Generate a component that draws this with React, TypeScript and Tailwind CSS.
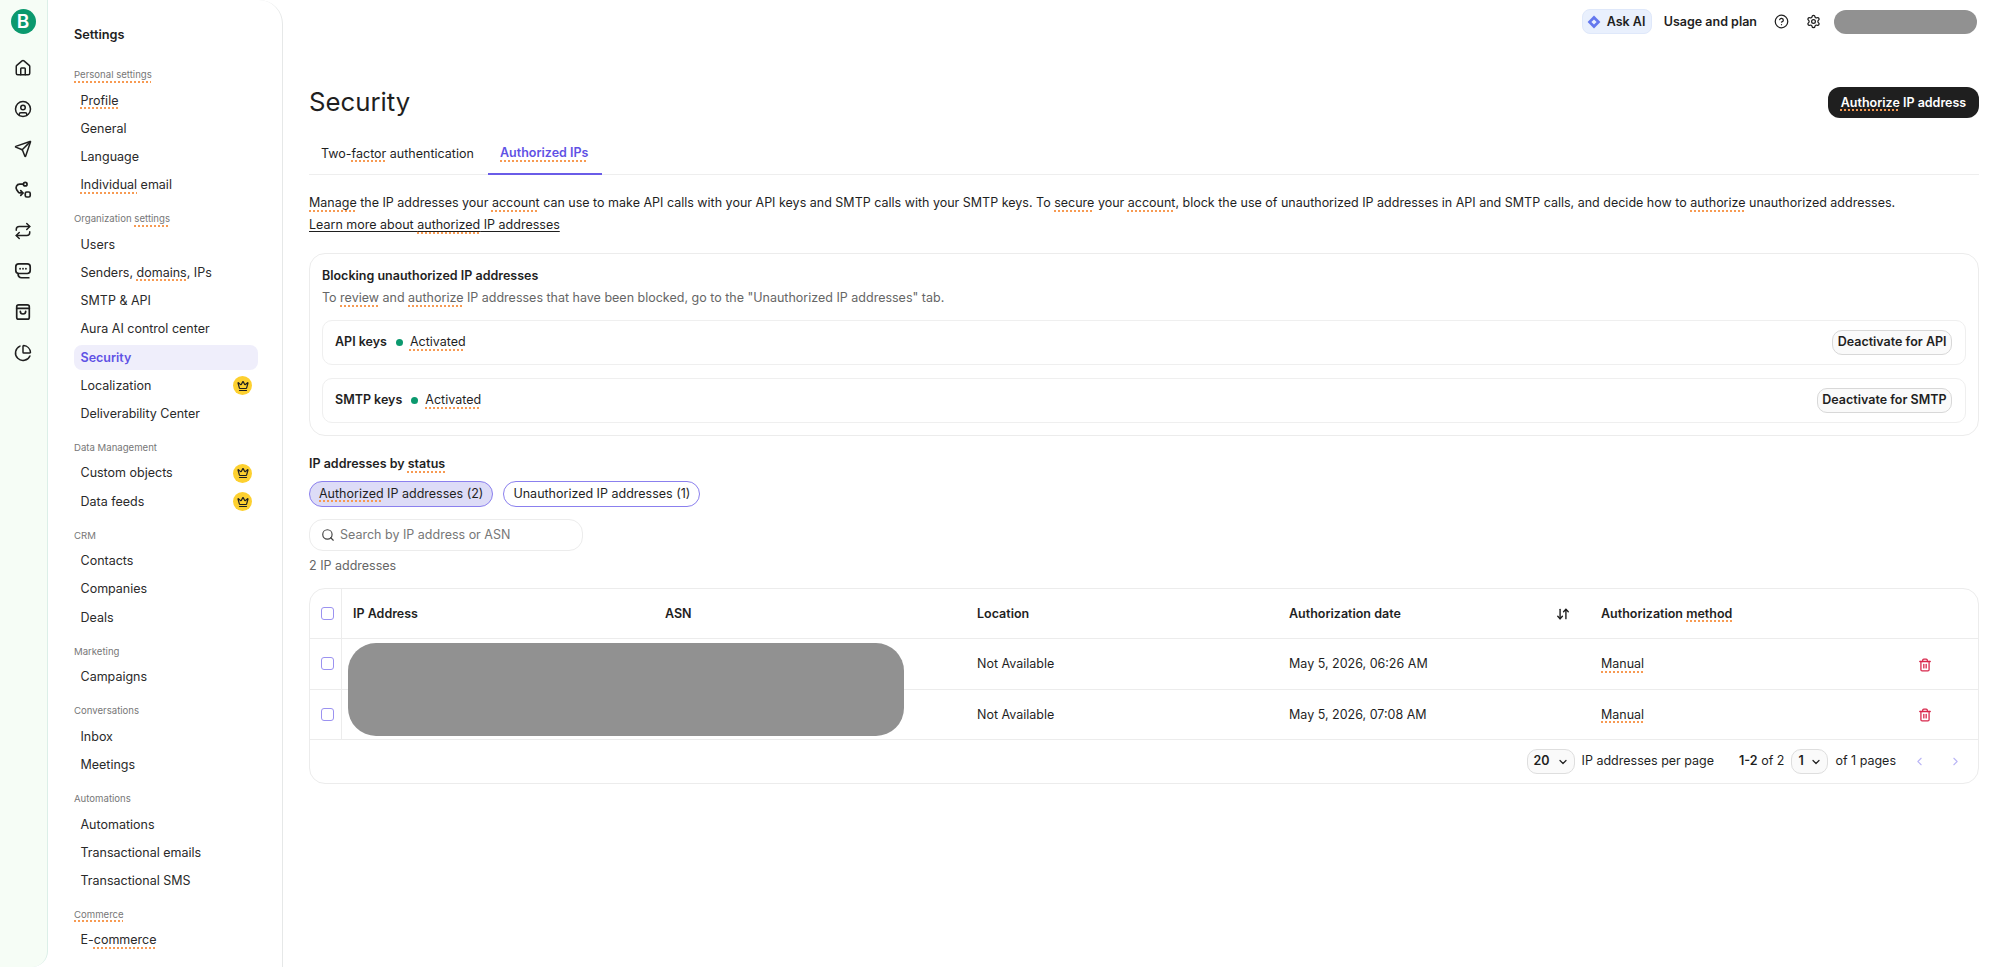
import React from 'react';
import { ChevronDown, ChevronLeft, ChevronRight, CircleHelp, CircleUser, Crown, House, Repeat, Search, Send, Settings, Trash2, ChartPie, ArrowDownUp } from 'lucide-react';

// ── Data ─────────────────────────────────────────────

type NavItem = { label: React.ReactNode; crown?: boolean; active?: boolean };

// Spellcheck squiggle from the browser, kept since it is in the picture
const S = ({ children }: { children: React.ReactNode }) => (
  <span className="underline decoration-dotted decoration-[#f79a52] decoration-[1.5px] underline-offset-[3px]">{children}</span>
);

const NAV: { title: React.ReactNode; items: NavItem[] }[] = [
  {
    title: <S>Personal settings</S>,
    items: [{ label: <S>Profile</S> }, { label: 'General' }, { label: 'Language' }, { label: <><S>Individual</S> email</> }],
  },
  {
    title: <>Organization <S>settings</S></>,
    items: [
      { label: 'Users' },
      { label: <>Senders, <S>domains</S>, IPs</> },
      { label: 'SMTP & API' },
      { label: 'Aura AI control center' },
      { label: 'Security', active: true },
      { label: 'Localization', crown: true },
      { label: 'Deliverability Center' },
    ],
  },
  { title: 'Data Management', items: [{ label: 'Custom objects', crown: true }, { label: 'Data feeds', crown: true }] },
  { title: 'CRM', items: [{ label: 'Contacts' }, { label: 'Companies' }, { label: 'Deals' }] },
  { title: 'Marketing', items: [{ label: 'Campaigns' }] },
  { title: 'Conversations', items: [{ label: 'Inbox' }, { label: 'Meetings' }] },
  { title: 'Automations', items: [{ label: 'Automations' }, { label: 'Transactional emails' }, { label: 'Transactional SMS' }] },
  { title: <S>Commerce</S>, items: [{ label: <>E-<S>commerce</S></> }] },
];

const ROWS = [
  { location: 'Not Available', date: 'May 5, 2026, 06:26 AM', method: 'Manual' },
  { location: 'Not Available', date: 'May 5, 2026, 07:08 AM', method: 'Manual' },
];

const GRID = 'grid grid-cols-[32px_312px_312px_312px_312px_1fr]';

// ── Rail icons with no lucide match ──────────────────

const FlowIcon = () => (
  <svg viewBox="0 0 16 16" className="w-[18px] h-[18px]" fill="none" stroke="currentColor" strokeWidth="1.5" strokeLinecap="round" strokeLinejoin="round">
    <circle cx="10" cy="2.8" r="1.6" />
    <rect x="10" y="9.8" width="4.4" height="4.4" rx="1.3" />
    <path d="M8.2 2.8H5a3.2 3.2 0 0 0-2.6 5l1.4 2a1.8 1.8 0 0 0 1.5.8h2.4" />
    <path d="M6 8.6 8 10.7 6 12.8" />
  </svg>
);

const ChatIcon = () => (
  <svg viewBox="0 0 16 16" className="w-[18px] h-[18px]" fill="none" stroke="currentColor" strokeWidth="1.5" strokeLinecap="round" strokeLinejoin="round">
    <rect x="1.6" y="1.6" width="12.8" height="8.6" rx="2.6" />
    <path d="M3.6 10.2c0 2.6 1.4 3.8 3.2 3.8h6.4" />
    <path d="M5.4 6h.01M8 6h.01M10.6 6h.01" strokeWidth="1.6" />
  </svg>
);

const BagIcon = () => (
  <svg viewBox="0 0 16 16" className="w-[18px] h-[18px]" fill="none" stroke="currentColor" strokeWidth="1.5" strokeLinecap="round" strokeLinejoin="round">
    <rect x="2.4" y="1.6" width="11.2" height="12.8" rx="1.8" />
    <path d="M2.4 4.8h11.2" />
    <path d="M5.6 7.4a2.4 2.4 0 0 0 4.8 0" />
  </svg>
);

const AiIcon = () => (
  <svg viewBox="0 0 14 14" className="w-[14px] h-[14px]">
    <path d="M7 0.6 13.4 7 7 13.4 0.6 7Z" fill="#6478ee" />
    <path d="M7 4.4 9.6 7 7 9.6 4.4 7Z" fill="#eaf0fd" />
  </svg>
);

// ── Parts ────────────────────────────────────────────

const Rail = () => (
  <div className="w-[48px] shrink-0 h-full bg-[#f6fdf6] border-r border-[#dcefe8] rounded-br-[16px] flex flex-col items-center pr-[2px] text-[#1f1f1f]">
    <div className="mt-[8.5px] ml-[1px] w-[25px] h-[25px] rounded-full bg-[#0b996e] flex items-center justify-center text-white text-[19px] font-semibold leading-none">B</div>
    <div className="mt-[25.5px] flex flex-col items-center gap-[22.7px] [&>svg]:w-[18px] [&>svg]:h-[18px]">
      <House strokeWidth={2} />
      <CircleUser strokeWidth={2} />
      <Send strokeWidth={2} />
      <FlowIcon />
      <Repeat strokeWidth={2} />
      <ChatIcon />
      <BagIcon />
      <ChartPie strokeWidth={2} />
    </div>
  </div>
);

const Sidebar = () => (
  <div className="w-[235px] shrink-0 h-full bg-white border-r border-[#e6e8e8] rounded-tr-[24px] pt-[25px] pl-[26px] pr-[24px] overflow-hidden">
    <div className="h-5 leading-5 text-[12.75px] font-semibold text-[#1f1f1f] mb-[22px]">Settings</div>
    {NAV.map((section, i) => (
      <div key={i} className="mb-3">
        <div className="h-4 leading-4 text-[9.6px] text-[#777] mb-[3.4px]">{section.title}</div>
        {section.items.map((item, j) => (
          <div key={j} className="h-[28.2px] flex items-center">
            <div className={`w-full h-[25px] rounded-lg pl-[6.5px] pr-[6px] flex items-center justify-between text-[12.5px] ${item.active ? 'bg-[#efeefb] text-[#5f52e5] font-semibold' : 'text-[#2a2a2a]'}`}>
              <span className="pt-px">{item.label}</span>
              {item.crown && (
                <span className="w-[19px] h-[19px] rounded-full bg-[#fdd02f] flex items-center justify-center text-[#1f1f1f]">
                  <Crown className="w-3 h-3" strokeWidth={2.4} />
                </span>
              )}
            </div>
          </div>
        ))}
      </div>
    ))}
  </div>
);

const TopBar = () => (
  <div className="h-[25px] flex items-center justify-end text-[#1f1f1f]">
    <div className="h-[25px] w-[70px] rounded-lg bg-[#e9f0fd] border border-[#dfe8fa] flex items-center pl-[4px] gap-[6px] text-[12.5px] font-semibold">
      <AiIcon /> <span className="pt-px">Ask AI</span>
    </div>
    <span className="ml-3 pt-px text-[12.5px] font-semibold">Usage and plan</span>
    <CircleHelp className="ml-[17px] w-[15px] h-[15px]" strokeWidth={2} />
    <Settings className="ml-[17px] w-[15px] h-[15px]" strokeWidth={2} />
    <div className="ml-[13px] mr-[2px] w-[143px] h-[24px] rounded-[12px] bg-[#919191]" />
  </div>
);

const OutlineButton = ({ children }: { children: React.ReactNode }) => (
  <button className="h-[25px] px-[4.5px] rounded-[10px] border border-[#d8d8d8] bg-[#fafafa] text-[12.5px] font-semibold text-[#1f1f1f]">{children}</button>
);

const KeyRow = ({ name, action }: { name: string; action: string }) => (
  <div className="h-[45px] rounded-[10px] border border-[#efefef] pl-[12px] pr-[13px] flex items-center justify-between">
    <div className="flex items-center text-[12.5px] text-[#1f1f1f]">
      <span className="font-semibold">{name}</span>
      <span className="ml-[9px] mr-[7px] w-[7px] h-[7px] rounded-full bg-[#0b996e]" />
      <S>Activated</S>
    </div>
    <OutlineButton>{action}</OutlineButton>
  </div>
);

const PageSelect = ({ value, width }: { value: string; width: string }) => (
  <div className={`${width} h-[25px] rounded-[10px] border border-[#dedede] bg-[#fafafa] flex items-center justify-between pl-[6px] pr-[5px] text-[12.5px] font-semibold text-[#1f1f1f]`}>
    {value}
    <ChevronDown className="w-3 h-3" strokeWidth={2.4} />
  </div>
);

const Checkbox = () => <span className="w-[13px] h-[13px] rounded-[3px] border border-[#9b92f0] bg-white" />;

const Table = () => (
  <div className="relative mt-[12px] rounded-2xl border border-[#ececec] text-[12.5px] text-[#1f1f1f]">
    <div className={`${GRID} h-[50px] border-b border-[#ececec] font-semibold`}>
      <div className="flex items-center justify-center pl-1 border-r border-[#ececec]"><Checkbox /></div>
      <div className="flex items-center pl-[11px] pt-px">IP Address</div>
      <div className="flex items-center pl-[11px] pt-px">ASN</div>
      <div className="flex items-center pl-[11px] pt-px">Location</div>
      <div className="flex items-center justify-between pl-[11px] pr-[20px] pt-px">
        Authorization date
        <ArrowDownUp className="w-[14px] h-[14px]" strokeWidth={2.4} />
      </div>
      <div className="flex items-center pl-[11px] pt-px"><span>Authorization <S>method</S></span></div>
    </div>
    {ROWS.map((row, i) => (
      <div key={i} className={`${GRID} h-[50.5px] border-b border-[#ececec]`}>
        <div className="flex items-center justify-center pl-1 border-r border-[#ececec]"><Checkbox /></div>
        <div />
        <div />
        <div className="flex items-center pl-[11px] pt-[2px]">{row.location}</div>
        <div className="flex items-center pl-[11px] pt-[2px]">{row.date}</div>
        <div className="flex items-center justify-between pl-[11px] pr-[46px] pt-[2px]">
          <S>{row.method}</S>
          <Trash2 className="w-[14px] h-[14px] text-[#d8264b]" strokeWidth={2.2} />
        </div>
      </div>
    ))}
    <div className="h-[43px] flex items-center justify-end pr-[16px]">
      <PageSelect value="20" width="w-[48px]" />
      <span className="ml-[7px]">IP addresses per page</span>
      <span className="ml-[25px]"><span className="font-semibold">1-2</span> of 2</span>
      <span className="ml-[7px]"><PageSelect value="1" width="w-[37px]" /></span>
      <span className="ml-[7px]">of 1 pages</span>
      <ChevronLeft className="ml-[17px] w-[13px] h-[13px] text-[#b9b4f5]" strokeWidth={2} />
      <ChevronRight className="ml-[23px] w-[13px] h-[13px] text-[#b9b4f5]" strokeWidth={2} />
    </div>
    {/* redaction over the IP and ASN cells */}
    <div className="absolute left-[38px] top-[54px] w-[556px] h-[93px] rounded-[28px] bg-[#919191]" />
  </div>
);

export default function App() {
  return (
    <div className="w-[2000px] h-[967px] overflow-hidden bg-white flex font-['Inter',sans-serif]">
      <Rail />
      <Sidebar />
      <main className="flex-1 min-w-0 pt-[9px] pl-[26px] pr-[21px]">
        <TopBar />

        <div className="mt-[53px] h-[31px] flex items-center justify-between">
          <h1 className="text-[25.75px] font-normal text-[#1f1f1f]">Security</h1>
          <button className="h-[31px] w-[151px] pt-px rounded-xl bg-[#1f1f1f] text-white text-[12.5px] font-semibold"><S>Authorize</S> IP address</button>
        </div>

        <div className="mt-[16px] h-[41px] flex border-b border-[#eeeeee] text-[12.5px]">
          <div className="w-[179px] pl-3 flex items-center text-[#1f1f1f]"><span>Two-<S>factor</S> authentication</span></div>
          <div className="w-[114px] h-[41px] pl-3 flex items-center border-b-2 border-[#6a5ce8] text-[#5f52e5] font-semibold"><S>Authorized IPs</S></div>
        </div>

        <p className="mt-[17px] text-[12.5px] leading-[22px] text-[#1f1f1f]">
          <S>Manage</S> the IP addresses your <S>account</S> can use to make API calls with your API keys and SMTP calls with your SMTP keys. To <S>secure</S> your <S>account</S>, block the use of unauthorized IP addresses in API and SMTP calls, and decide how to <S>authorize</S> unauthorized addresses.
          <br />
          <span className="underline underline-offset-2">Learn more about <S>authorized</S> IP addresses</span>
        </p>

        <section className="mt-[17px] rounded-2xl border border-[#ececec] p-[12px]">
          <div className="h-5 leading-5 text-[12.5px] font-semibold text-[#1f1f1f]">Blocking unauthorized IP addresses</div>
          <div className="mt-[2px] h-5 leading-5 text-[12.5px] text-[#666]">To <S>review</S> and <S>authorize</S> IP addresses that have been blocked, go to the "Unauthorized IP addresses" tab.</div>
          <div className="mt-[12px] flex flex-col gap-[13px]">
            <KeyRow name="API keys" action="Deactivate for API" />
            <KeyRow name="SMTP keys" action="Deactivate for SMTP" />
          </div>
        </section>

        <div className="mt-[18px] h-5 leading-5 text-[12.5px] font-semibold text-[#1f1f1f]">IP addresses by <S>status</S></div>
        <div className="mt-[7px] flex gap-[10px] text-[12.5px] text-[#1f1f1f]">
          <span className="h-[26px] px-[9px] rounded-full bg-[#dddcf7] border border-[#8b80ee] flex items-center"><span><S>Authorized</S> IP addresses (2)</span></span>
          <span className="h-[26px] px-[9px] rounded-full border border-[#8b80ee] flex items-center">Unauthorized IP addresses (1)</span>
        </div>
        <div className="mt-[12px] w-[274px] h-[32px] rounded-[14px] border border-[#ececec] flex items-center pl-[11px] gap-[5px] text-[12.5px] text-[#777]">
          <Search className="w-[14px] h-[14px] text-[#444]" strokeWidth={2} />
          Search by IP address or ASN
        </div>
        <div className="mt-[5px] h-5 leading-5 text-[12.5px] text-[#666]">2 IP addresses</div>

        <Table />
      </main>
    </div>
  );
}
